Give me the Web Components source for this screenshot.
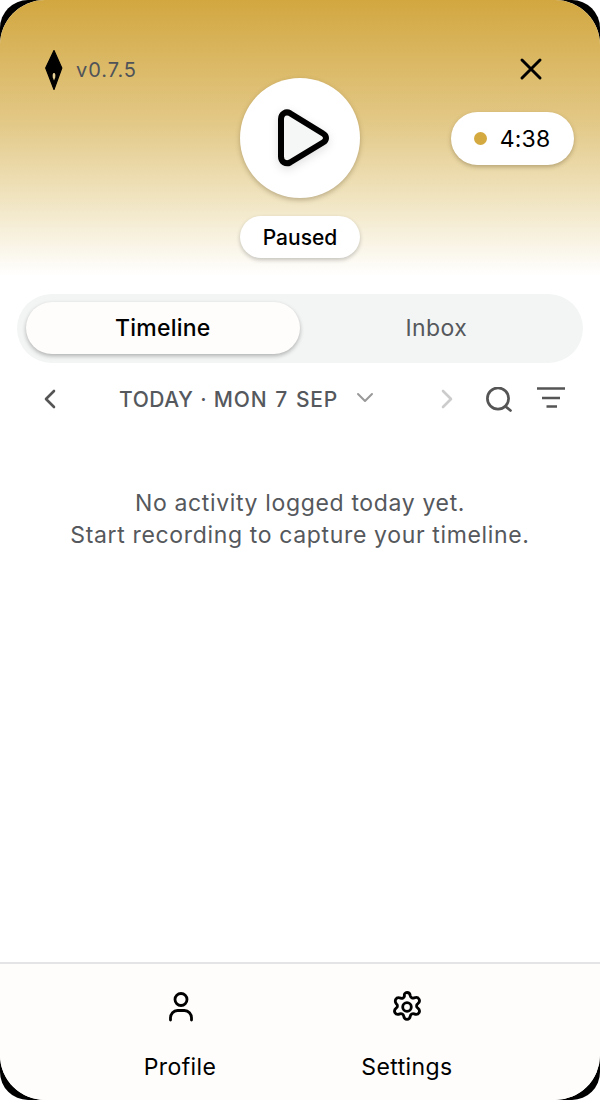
<!DOCTYPE html>
<html><head><meta charset="utf-8">
<style>
html,body{margin:0;padding:0;background:#fff;height:1100px;overflow:hidden}
body{font-family:Inter,"Noto Sans",sans-serif}
</style></head><body>
<template id="app-tpl"><style>
:host{display:flex;flex-direction:column;width:600px;height:1100px;background:#000;position:relative;overflow:hidden;border-radius:28px;font-family:Inter,sans-serif;color:#000}
.inner{flex:1;display:flex;flex-direction:column;background:#fff;border-radius:45px;overflow:hidden}
main{flex:1;display:flex;flex-direction:column;min-height:0}
</style><div class="inner"><slot name="header"></slot><main><slot></slot></main><slot name="footer"></slot></div></template>

<template id="hdr-tpl"><style>
:host{display:block;height:276px;flex:none;position:relative;background:linear-gradient(180deg,#d2a740 0%,#e3c988 45%,#f0e4c0 72%,#ffffff 100%)}
.brand{position:absolute;left:44px;top:50px;display:flex;align-items:center;gap:11px;font-size:20px;color:#4f5359;letter-spacing:.95px}
.close{position:absolute;left:519px;top:57px;width:24px;height:24px}
.play{position:absolute;left:240px;top:78px;width:120px;height:120px;border-radius:50%;background:#fff;box-shadow:0 2px 5px rgba(90,70,30,.35);display:flex;align-items:center;justify-content:center}
.status{position:absolute;left:240px;top:216px;width:120px;height:42px;border-radius:21px;background:#fff;box-shadow:0 2px 4px rgba(0,0,0,.22);display:flex;align-items:center;justify-content:center;font-size:21px;font-weight:500}
.timer{position:absolute;left:451px;top:112px;width:123px;height:53px;border-radius:27px;background:#fff;box-shadow:0 2px 4px rgba(90,70,30,.35);display:flex;align-items:center;justify-content:center;gap:13px;font-size:23px;letter-spacing:.2px}
.dot{width:13px;height:13px;border-radius:50%;background:#d4aa40;margin-left:-1px}
</style>
<div class="brand"><svg width="21" height="40" viewBox="0 0 21 40"><path d="M10 .5L17.800 18L10 39.500L1.700 18Z" fill="#000" stroke="#000" stroke-width="1.200" stroke-linejoin="round"/><path d="M10 23c1.300 0 1.600 1.800 1.200 4.500L10 30.500L8.800 27.500C8.400 24.800 8.700 23 10 23Z" fill="#e6cf94"/></svg><span>v0.7.5</span></div>
<svg class="close" viewBox="0 0 24 24"><path d="M3 3L21 21M21 3L3 21" stroke="#000" stroke-width="3" stroke-linecap="round"/></svg>
<div class="play"><svg width="60" height="64" viewBox="0 0 60 64" style="filter:drop-shadow(0 3px 5px rgba(0,0,0,.12))"><path d="M11 13c0-5.500 5-8 9-5.800L53 27.500c4 2.300 4 6.700 0 9L20 56.500c-4 2.200-9-.5-9-6Z" fill="#f5f6f6" stroke="#000" stroke-width="6" stroke-linejoin="round"/></svg></div>
<div class="status">Paused</div>
<div class="timer"><span class="dot"></span><span>4:38</span></div>
</template>

<template id="tabs-tpl"><style>
:host{display:flex;margin:18px 17px 0 17px;height:69px;box-sizing:border-box;padding:8px 10px 9px 9px;background:#f3f5f4;border-radius:35px}
.t{flex:1;display:flex;align-items:center;justify-content:center;font-size:23px;color:#55585c;height:52px;border-radius:26px;letter-spacing:.4px}
.a{background:#fefdfb;color:#000;font-weight:500;letter-spacing:.25px;box-shadow:0 2px 4px rgba(0,0,0,.28)}
</style><div class="t a">Timeline</div><div class="t">Inbox</div></template>

<template id="nav-tpl"><style>
:host{display:flex;align-items:center;height:72px;position:relative;color:#55585c}
svg{position:absolute;fill:none;stroke-linejoin:round}
.d{position:absolute;left:119px;font-size:21px;font-weight:500;letter-spacing:.6px;word-spacing:.5px}
.d span{letter-spacing:.8px;word-spacing:1.500px}
</style>
<svg style="left:40px;top:25px" width="20" height="22" viewBox="0 0 20 22" stroke-linecap="round"><path d="M14 3L6 11L14 19" stroke="#555" stroke-width="2.600"/></svg>
<div class="d">TODAY · <span>MON 7 SEP</span></div>
<svg style="left:355px;top:26px" width="20" height="18" viewBox="0 0 20 18" stroke-linecap="round"><path d="M3 5L10 12L17 5" stroke="#999" stroke-width="2"/></svg>
<svg style="left:437px;top:25px" width="20" height="22" viewBox="0 0 20 22" stroke-linecap="round"><path d="M6 3L14 11L6 19" stroke="#ccc" stroke-width="2.600"/></svg>
<svg style="left:484px;top:24px" width="30" height="30" viewBox="0 0 30 30" stroke-linecap="round"><circle cx="14" cy="11.500" r="10.600" stroke="#555" stroke-width="2.700"/><path d="M21.500 19.500L26.500 23.500" stroke="#555" stroke-width="2.700"/></svg>
<svg style="left:535px;top:22px" width="32" height="28" viewBox="0 0 32 28"><path d="M2 3.500H30M7 13H25M11.500 21.500H22" stroke="#555" stroke-width="2.600"/></svg>
</template>

<template id="empty-tpl"><style>
:host{display:block;flex:1;padding-top:52px;text-align:center;font-size:23px;line-height:32px;color:#55585c;letter-spacing:.65px}
</style><slot></slot></template>

<template id="foot-tpl"><style>
:host{display:grid;grid-template-columns:227px 227px;flex:none;height:138px;box-sizing:border-box;padding:0 80px 0 66.5px;background:#fefdfb;border-top:2px solid #e4e4e6}
</style><slot></slot></template>

<template id="item-tpl"><style>
:host{display:flex;flex-direction:column;align-items:center;padding-top:26px;font-size:23px;letter-spacing:.4px;color:#000}
span{margin-top:27px;line-height:28px}
</style><slot name="icon"></slot><span><slot></slot></span></template>

<x-app>
<x-header slot="header"></x-header>
<x-tabs></x-tabs>
<x-datenav></x-datenav>
<x-empty>No activity logged today yet.<br>Start recording to capture your timeline.</x-empty>
<x-foot slot="footer">
<x-item><svg slot="icon" width="32" height="36" viewBox="0 0 32 36" style="margin-left:2px" fill="none" stroke="#000" stroke-width="2.800" stroke-linecap="round"><circle cx="16" cy="9.500" r="6"/><path d="M5.500 30v-2c0-4 3-7.500 7-7.500h7c4 0 7 3.500 7 7.500v2"/></svg>Profile</x-item>
<x-item><svg slot="icon" width="32" height="36" viewBox="0 0 32 36" style="margin-top:-1px;margin-bottom:1px" fill="none" stroke="#000" stroke-width="2.800" stroke-linejoin="round"><path d="M16 3.500c1.800 0 3 1.300 3.300 3.300.3 1.700 2.200 2.800 3.800 2.100 1.900-.8 4-.4 4.900 1.200.9 1.600.2 3.600-1.400 4.800-1.400 1-1.400 3 0 4 1.600 1.200 2.300 3.200 1.400 4.800-.9 1.600-3 2-4.900 1.200-1.600-.7-3.500.4-3.800 2.100-.3 2-1.500 3.300-3.300 3.300s-3-1.300-3.300-3.300c-.3-1.700-2.200-2.800-3.800-2.100-1.900.8-4 .4-4.900-1.200-.9-1.600-.2-3.600 1.400-4.800 1.400-1 1.400-3 0-4C4.600 13.900 3.900 11.900 4.800 10.300c.9-1.600 3-2 4.900-1.200 1.600.7 3.500-.4 3.800-2.100C12.800 5 14.200 3.500 16 3.500Z"/><circle cx="16" cy="18" r="4.300"/></svg>Settings</x-item>
</x-foot>
</x-app>
<script>
for (const [name, id] of [['x-app','app-tpl'],['x-header','hdr-tpl'],['x-tabs','tabs-tpl'],['x-datenav','nav-tpl'],['x-empty','empty-tpl'],['x-foot','foot-tpl'],['x-item','item-tpl']]) {
  customElements.define(name, class extends HTMLElement {
    constructor(){super();this.attachShadow({mode:'open'}).appendChild(document.getElementById(id).content.cloneNode(true));}
  });
}
</script>
</body></html>
